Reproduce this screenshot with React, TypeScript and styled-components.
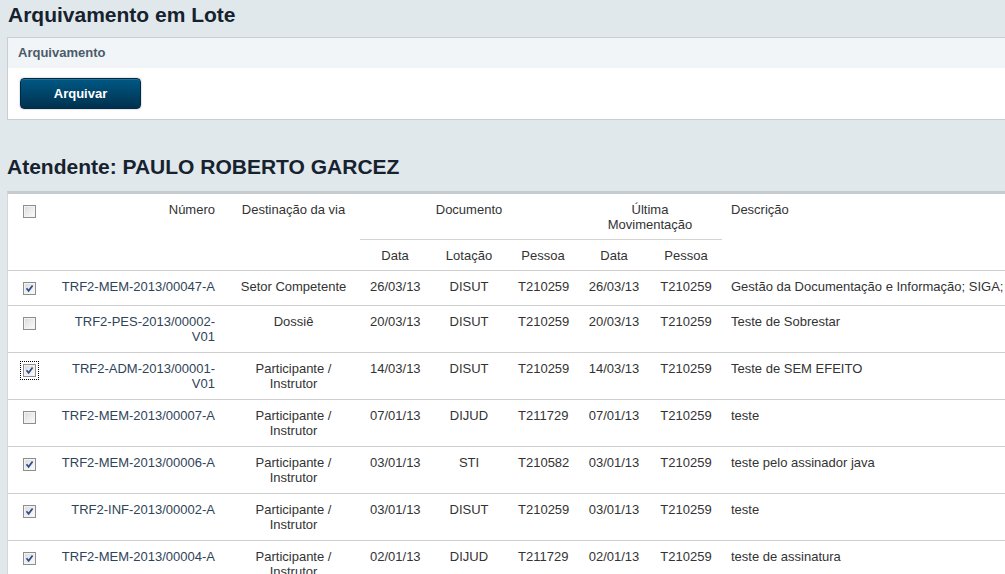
import React from 'react';
import styled, { createGlobalStyle } from 'styled-components';

const Global = createGlobalStyle`
  html, body { margin: 0; padding: 0; background: #e1e8ec; overflow: hidden; }
  body { font-family: "Liberation Sans", Arial, sans-serif; }
`;

const Page = styled.div`
  width: 1200px;
  padding: 0 0 0 7px;
  box-sizing: border-box;
`;

const Title = styled.h1`
  margin: 0;
  padding: 3px 1px 10px;
  font-size: 21px;
  line-height: 24px;
  font-weight: bold;
  color: #16222e;
`;

const SubTitle = styled(Title)`
  padding: 35px 0 12px;
`;

const Box = styled.section`
  border: 1px solid #c9ced2;
  background: #fff;
`;

const BoxHeader = styled.div`
  height: 30px;
  line-height: 30px;
  padding: 0 10px;
  background: #f2f5f7;
  font-size: 13px;
  font-weight: bold;
  color: #4b5b6a;
`;

const BoxBody = styled.div`
  padding: 10px 12px;
`;

const Button = styled.button`
  display: block;
  width: 121px;
  height: 31px;
  border: 1px solid #012b44;
  border-radius: 4px;
  background: linear-gradient(#005884, #00314f);
  box-shadow: 0 0 2px rgba(0, 0, 0, 0.35), inset 0 1px 0 rgba(255, 255, 255, 0.15);
  color: #fff;
  font-family: "Liberation Sans", Arial, sans-serif;
  font-size: 13px;
  font-weight: bold;
  cursor: pointer;
`;

const TableCard = styled.div`
  border-top: 3px solid #c6cbcf;
  border-left: 1px solid #d3d8db;
  background: #fff;
`;

const Table = styled.table`
  width: 100%;
  table-layout: fixed;
  border-collapse: collapse;
  font-size: 13px;
  line-height: 15px;
  color: #333;
`;

const Head = styled.thead`
  border-bottom: 1px solid #cfcfcf;
`;

type Align = 'left' | 'center' | 'right';

const Th = styled.th<{ $align?: Align; $sub?: boolean }>`
  padding: 8px 10px 7px;
  vertical-align: top;
  font-weight: normal;
  text-align: ${(p) => p.$align || 'center'};
  border-top: ${(p) => (p.$sub ? '1px solid #d4d4d4' : 'none')};
  padding-right: ${(p) => (p.$align === 'right' ? '12px' : '10px')};
  padding-left: ${(p) => (p.$align === 'left' ? '9px' : '10px')};
`;

const Row = styled.tr`
  border-bottom: 1px solid #cfcfcf;
`;

const Td = styled.td<{ $align?: Align; $nowrap?: boolean }>`
  padding: 8px 10px;
  vertical-align: top;
  text-align: ${(p) => p.$align || 'center'};
  padding-right: ${(p) => (p.$align === 'right' ? '12px' : '10px')};
  padding-left: ${(p) => (p.$align === 'left' ? '9px' : '10px')};
  white-space: ${(p) => (p.$nowrap ? 'nowrap' : 'normal')};
`;

const NumberLink = styled.span`
  color: #2f4459;
`;

const CheckCell = styled.div`
  height: 18px;
  display: flex;
  justify-content: center;
  align-items: flex-start;
`;

const Check = styled.span<{ $focus?: boolean }>`
  display: block;
  margin-top: 3px;
  width: 11px;
  height: 11px;
  border: 1px solid #8c8e90;
  background: linear-gradient(135deg, #d9d9d6 0%, #ececea 50%, #fbfbfa 100%);
  box-shadow: inset 0 0 0 1px #f3f3f3;
  outline: ${(p) => (p.$focus ? '1px dotted #000' : 'none')};
  outline-offset: 2px;
  svg { display: block; }
`;

const Checkbox = ({ checked, focus }: { checked?: boolean; focus?: boolean }) => (
  <CheckCell>
    <Check $focus={focus}>
      {checked && (
        <svg width="11" height="11" viewBox="0 0 11 11">
          <path d="M2.5 5.2 L4.6 7.8 L8.6 2.4" fill="none" stroke="#2c4c8e" strokeWidth="1.7" />
        </svg>
      )}
    </Check>
  </CheckCell>
);

type Doc = {
  checked: boolean;
  focus?: boolean;
  numero: string;
  dest: string;
  data: string;
  lot: string;
  pessoa: string;
  mData: string;
  mPessoa: string;
  desc: string;
};

const PI = 'Participante / Instrutor';

const docs: Doc[] = [
  { checked: true, numero: 'TRF2-MEM-2013/00047-A', dest: 'Setor Competente', data: '26/03/13', lot: 'DISUT', pessoa: 'T210259', mData: '26/03/13', mPessoa: 'T210259', desc: 'Gestão da Documentação e Informação; SIGA;' },
  { checked: false, numero: 'TRF2-PES-2013/00002-V01', dest: 'Dossiê', data: '20/03/13', lot: 'DISUT', pessoa: 'T210259', mData: '20/03/13', mPessoa: 'T210259', desc: 'Teste de Sobrestar' },
  { checked: true, focus: true, numero: 'TRF2-ADM-2013/00001-V01', dest: PI, data: '14/03/13', lot: 'DISUT', pessoa: 'T210259', mData: '14/03/13', mPessoa: 'T210259', desc: 'Teste de SEM EFEITO' },
  { checked: false, numero: 'TRF2-MEM-2013/00007-A', dest: PI, data: '07/01/13', lot: 'DIJUD', pessoa: 'T211729', mData: '07/01/13', mPessoa: 'T210259', desc: 'teste' },
  { checked: true, numero: 'TRF2-MEM-2013/00006-A', dest: PI, data: '03/01/13', lot: 'STI', pessoa: 'T210582', mData: '03/01/13', mPessoa: 'T210259', desc: 'teste pelo assinador java' },
  { checked: true, numero: 'TRF2-INF-2013/00002-A', dest: PI, data: '03/01/13', lot: 'DISUT', pessoa: 'T210259', mData: '03/01/13', mPessoa: 'T210259', desc: 'teste' },
  { checked: true, numero: 'TRF2-MEM-2013/00004-A', dest: PI, data: '02/01/13', lot: 'DIJUD', pessoa: 'T211729', mData: '02/01/13', mPessoa: 'T210259', desc: 'teste de assinatura' },
];

const widths = [42, 177, 133, 70, 78, 70, 72, 72];

export default function App() {
  return (
    <>
      <Global />
      <Page>
        <Title>Arquivamento em Lote</Title>
        <Box>
          <BoxHeader>Arquivamento</BoxHeader>
          <BoxBody>
            <Button type="button">Arquivar</Button>
          </BoxBody>
        </Box>
        <SubTitle>Atendente: PAULO ROBERTO GARCEZ</SubTitle>
        <TableCard>
          <Table>
            <colgroup>
              {widths.map((w, i) => (
                <col key={i} style={{ width: w }} />
              ))}
              <col />
            </colgroup>
            <Head>
              <tr>
                <Th rowSpan={2}>
                  <Checkbox />
                </Th>
                <Th rowSpan={2} $align="right">Número</Th>
                <Th rowSpan={2}>Destinação da via</Th>
                <Th colSpan={3}>Documento</Th>
                <Th colSpan={2}>Última Movimentação</Th>
                <Th rowSpan={2} $align="left">Descrição</Th>
              </tr>
              <tr>
                <Th $sub>Data</Th>
                <Th $sub>Lotação</Th>
                <Th $sub>Pessoa</Th>
                <Th $sub>Data</Th>
                <Th $sub>Pessoa</Th>
              </tr>
            </Head>
            <tbody>
              {docs.map((d) => (
                <Row key={d.numero}>
                  <Td>
                    <Checkbox checked={d.checked} focus={d.focus} />
                  </Td>
                  <Td $align="right">
                    <NumberLink>{d.numero}</NumberLink>
                  </Td>
                  <Td>{d.dest}</Td>
                  <Td>{d.data}</Td>
                  <Td>{d.lot}</Td>
                  <Td>{d.pessoa}</Td>
                  <Td>{d.mData}</Td>
                  <Td>{d.mPessoa}</Td>
                  <Td $align="left" $nowrap>{d.desc}</Td>
                </Row>
              ))}
            </tbody>
          </Table>
        </TableCard>
      </Page>
    </>
  );
}
